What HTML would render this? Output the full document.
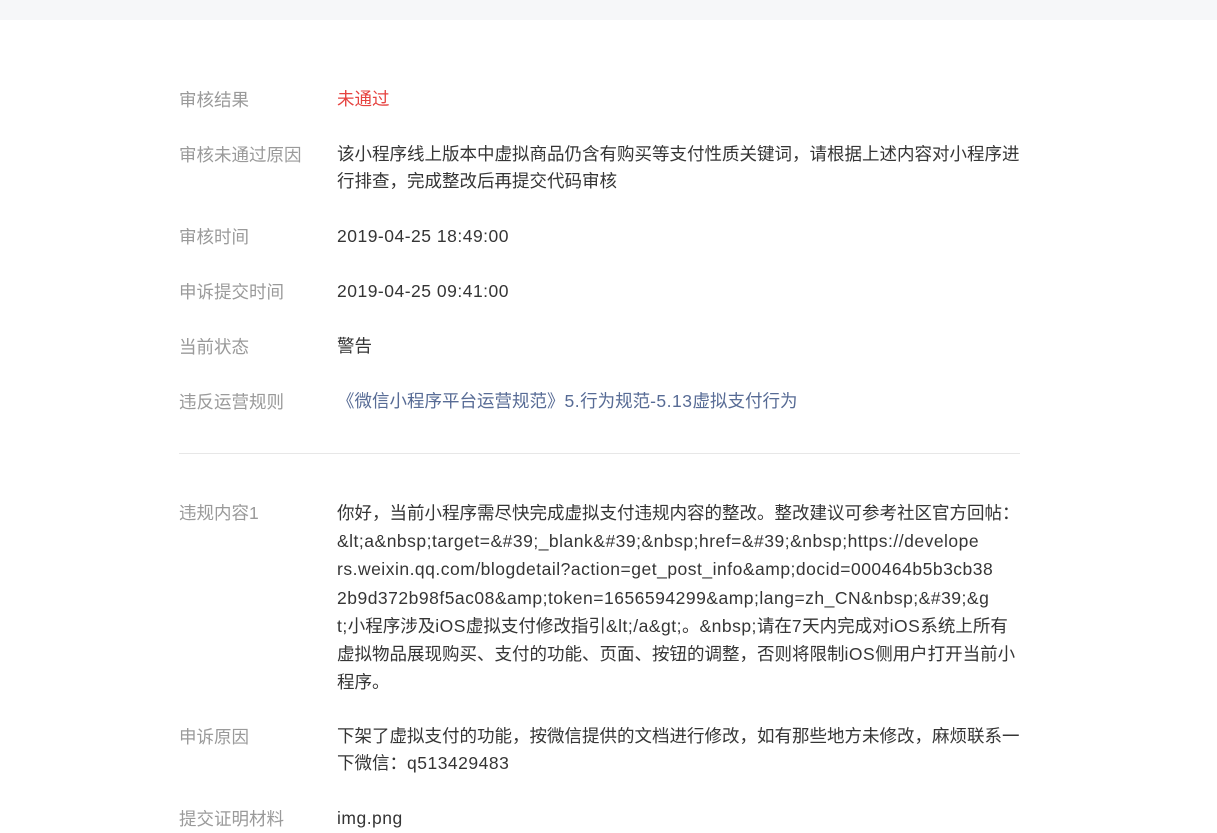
<!DOCTYPE html>
<html><head><meta charset="utf-8"><style>
body{margin:0;width:1217px;height:813px;overflow:hidden;background:#fff;font-family:"Liberation Sans","Noto Sans CJK SC",sans-serif;font-size:17.5px;}
.top{position:absolute;left:0;top:0;width:1217px;height:20px;background:#f6f7f9;}
.l{position:absolute;left:179px;color:#9a9a9a;white-space:nowrap;line-height:28px;font-size:17.5px;}
.v{position:absolute;left:337px;color:#353535;white-space:nowrap;line-height:27px;}
.e{letter-spacing:0.5px;}
.hr{position:absolute;left:179px;width:841px;top:453px;height:1px;background:#e7e7e7;}
</style></head><body>
<div class="top"></div>
<div class="l" style="top:86px">审核结果</div><div class="v" style="top:86px;color:#e64340">未通过</div>
<div class="l" style="top:141px">审核未通过原因</div><div class="v" style="top:141px">该小程序线上版本中虚拟商品仍含有购买等支付性质关键词，请根据上述内容对小程序进<br>行排查，完成整改后再提交代码审核</div>
<div class="l" style="top:223px">审核时间</div><div class="v e" style="top:223px">2019-04-25 18:49:00</div>
<div class="l" style="top:278px">申诉提交时间</div><div class="v e" style="top:278px">2019-04-25 09:41:00</div>
<div class="l" style="top:333px">当前状态</div><div class="v" style="top:333px">警告</div>
<div class="l" style="top:388px">违反运营规则</div><div class="v" style="top:388px;color:#576b95">《微信小程序平台运营规范》<span class="e">5.</span>行为规范<span class="e">-5.13</span>虚拟支付行为</div>
<div class="hr"></div>
<div class="l" style="top:499px">违规内容1</div><div class="v" style="top:499px;line-height:28.2px">你好，当前小程序需尽快完成虚拟支付违规内容的整改。整改建议可参考社区官方回帖：<br><span class="e">&amp;lt;a&amp;nbsp;target=&amp;#39;_blank&amp;#39;&amp;nbsp;href=&amp;#39;&amp;nbsp;https://develope</span><br><span class="e">rs.weixin.qq.com/blogdetail?action=get_post_info&amp;amp;docid=000464b5b3cb38</span><br><span class="e">2b9d372b98f5ac08&amp;amp;token=1656594299&amp;amp;lang=zh_CN&amp;nbsp;&amp;#39;&amp;g</span><br><span class="e">t;</span>小程序涉及<span class="e">iOS</span>虚拟支付修改指引<span class="e">&amp;lt;/a&amp;gt;</span>。<span class="e">&amp;nbsp;</span>请在<span class="e">7</span>天内完成对<span class="e">iOS</span>系统上所有<br>虚拟物品展现购买、支付的功能、页面、按钮的调整，否则将限制<span class="e">iOS</span>侧用户打开当前小<br>程序。</div>
<div class="l" style="top:723px">申诉原因</div><div class="v" style="top:723px">下架了虚拟支付的功能，按微信提供的文档进行修改，如有那些地方未修改，麻烦联系一<br>下微信：<span class="e">q513429483</span></div>
<div class="l" style="top:805px">提交证明材料</div><div class="v e" style="top:805px">img.png</div>
</body></html>
